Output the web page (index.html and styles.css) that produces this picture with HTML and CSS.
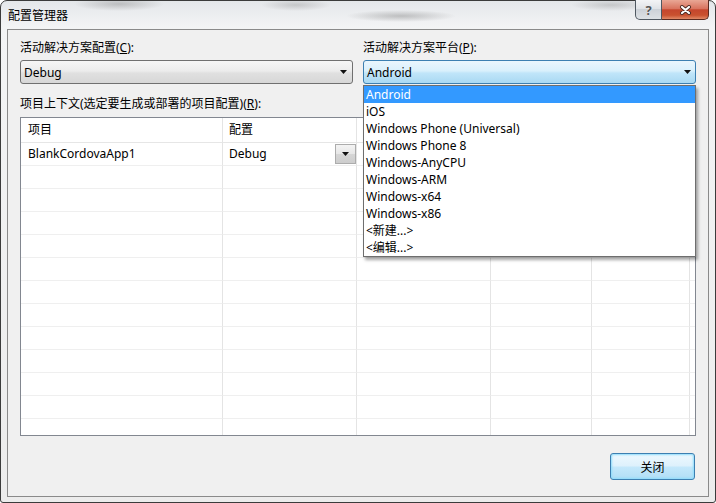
FILE: index.html
```html
<!DOCTYPE html>
<html lang="zh-CN">
<head>
  <meta charset="UTF-8">
  <title>配置管理器</title>
  <link rel="stylesheet" href="styles.css">
</head>
<body>
  <div class="window">
    <div class="titlebar">
      <span class="title">配置管理器</span>
      <div class="caption-buttons">
        <span class="btn-help">?</span>
        <span class="btn-close">
          <svg width="13" height="10" viewBox="0 0 13 10">
            <path d="M3 2l7 6M10 2l-7 6" stroke="#4d2a22" stroke-width="4" stroke-linecap="round" fill="none"/>
            <path d="M3 2l7 6M10 2l-7 6" stroke="#fff" stroke-width="2.2" stroke-linecap="round" fill="none"/>
          </svg>
        </span>
      </div>
    </div>

    <div class="client">
      <div class="pickers">
        <div class="field">
          <label>活动解决方案配置(<u>C</u>):</label>
          <div class="combo">
            <span>Debug</span>
            <svg class="arrow" width="7" height="4" viewBox="0 0 7 4"><polygon points="0,0 7,0 3.5,4" fill="#111"/></svg>
          </div>
        </div>
        <div class="field">
          <label>活动解决方案平台(<u>P</u>):</label>
          <div class="combo combo-open">
            <span>Android</span>
            <svg class="arrow" width="7" height="4" viewBox="0 0 7 4"><polygon points="0,0 7,0 3.5,4" fill="#111"/></svg>
          </div>
          <ul class="droplist">
            <li class="sel">Android</li>
            <li>iOS</li>
            <li>Windows Phone (Universal)</li>
            <li>Windows Phone 8</li>
            <li>Windows-AnyCPU</li>
            <li>Windows-ARM</li>
            <li>Windows-x64</li>
            <li>Windows-x86</li>
            <li>&lt;新建...&gt;</li>
            <li>&lt;编辑...&gt;</li>
          </ul>
        </div>
      </div>

      <label class="ctx-label">项目上下文(选定要生成或部署的项目配置)(<u>R</u>):</label>

      <div class="listview">
        <div class="lv-row lv-head"><span>项目</span><span>配置</span><span></span><span></span><span></span><span></span></div>
        <div class="lv-row">
          <span>BlankCordovaApp1</span>
          <span class="cell-combo">Debug
            <i class="mini-drop"><svg width="7" height="4" viewBox="0 0 7 4"><polygon points="0,0 7,0 3.5,4" fill="#111"/></svg></i>
          </span>
          <span></span><span></span><span></span><span></span>
        </div>
        <div class="lv-row"><span></span><span></span><span></span><span></span><span></span><span></span></div>
        <div class="lv-row"><span></span><span></span><span></span><span></span><span></span><span></span></div>
        <div class="lv-row"><span></span><span></span><span></span><span></span><span></span><span></span></div>
        <div class="lv-row"><span></span><span></span><span></span><span></span><span></span><span></span></div>
        <div class="lv-row"><span></span><span></span><span></span><span></span><span></span><span></span></div>
        <div class="lv-row"><span></span><span></span><span></span><span></span><span></span><span></span></div>
        <div class="lv-row"><span></span><span></span><span></span><span></span><span></span><span></span></div>
        <div class="lv-row"><span></span><span></span><span></span><span></span><span></span><span></span></div>
        <div class="lv-row"><span></span><span></span><span></span><span></span><span></span><span></span></div>
        <div class="lv-row"><span></span><span></span><span></span><span></span><span></span><span></span></div>
        <div class="lv-row"><span></span><span></span><span></span><span></span><span></span><span></span></div>
        <div class="lv-row"><span></span><span></span><span></span><span></span><span></span><span></span></div>
      </div>

      <div class="actions">
        <button class="btn-default">关闭</button>
      </div>
    </div>
  </div>
</body>
</html>
```

FILE: styles.css
```css
* {
  margin: 0;
  padding: 0;
  box-sizing: border-box;
}

body {
  width: 716px;
  height: 503px;
  overflow: hidden;
  background: #fff;
  font-family: "Noto Sans", "Noto Sans CJK SC", sans-serif;
  font-size: 12px;
  color: #000;
}

.window {
  width: 716px;
  height: 503px;
  display: flex;
  flex-direction: column;
  padding: 0 6px 5px;
  border: 1px solid #3b3b3b;
  border-radius: 7px 7px 3px 3px;
  background:
    radial-gradient(ellipse 45px 7px at 118px 3px, rgba(110, 110, 110, 0.35), transparent),
    radial-gradient(ellipse 35px 6px at 295px 4px, rgba(120, 120, 120, 0.3), transparent),
    radial-gradient(ellipse 55px 6px at 400px 15px, rgba(100, 100, 100, 0.35), transparent),
    radial-gradient(ellipse 40px 6px at 610px 4px, rgba(120, 120, 120, 0.3), transparent),
    linear-gradient(#e4e7ea, #f3f4f5 26px, #ececec);
}

/* title bar */
.titlebar {
  height: 28px;
  display: flex;
  justify-content: space-between;
  align-items: flex-start;
}

.title {
  padding: 6px 0 0 1px;
  line-height: 16px;
  font-family: "Noto Sans CJK SC", sans-serif;
}

.caption-buttons {
  display: flex;
  margin-top: -1px;
}

.btn-help, .btn-close {
  height: 20px;
  display: flex;
  align-items: center;
  justify-content: center;
  border: 1px solid #4f5861;
  border-top: none;
}

.btn-help {
  width: 27px;
  border-radius: 0 0 0 5px;
  background: linear-gradient(#f3f4f6, #e0e3e7 45%, #cdd2d8 50%, #dde1e5);
  color: #555;
  font-weight: bold;
  font-size: 13px;
  text-shadow: 0 0 1px #fff;
}

.btn-close {
  width: 47px;
  border-left: none;
  border-color: #5a2a20;
  border-radius: 0 0 5px 0;
  background: linear-gradient(#e9a795, #d9745f 45%, #c5462d 52%, #c9512f 80%, #e28a67);
}

/* client area */
.client {
  flex: 1;
  display: flex;
  flex-direction: column;
  padding: 10px 12px 0;
  border: 1px solid #8a8a8a;
  background: #f0f0f0;
}

label {
  display: block;
  line-height: 16px;
}

.pickers {
  display: grid;
  grid-template-columns: 1fr 1fr;
  gap: 10px;
}

.field {
  position: relative;
}

.field label {
  margin-bottom: 4px;
}

.combo {
  height: 24px;
  display: flex;
  align-items: center;
  justify-content: space-between;
  padding: 0 5px 0 3px;
  border: 1px solid #707070;
  border-radius: 3px;
  background: linear-gradient(#f6f6f6, #ececec 45%, #e0e0e0 55%, #d7d7d7);
}

.combo-open {
  padding-right: 4px;
  border-color: #3c7fb1;
  background: linear-gradient(#eaf6fd, #d9f0fc 45%, #c0e5f9 55%, #a9d9f3);
}

.droplist {
  position: absolute;
  top: 100%;
  left: 0;
  width: 100%;
  margin-top: 1px;
  z-index: 2;
  list-style: none;
  background: #fff;
  border: 1px solid #6e6e6e;
  box-shadow: 2px 3px 3px rgba(0, 0, 0, 0.35);
}

.droplist li {
  height: 17px;
  line-height: 17px;
  padding-left: 2px;
}

.droplist li.sel {
  background: #3399ff;
  color: #fff;
}

.ctx-label {
  margin: 12px 0 5px;
}

/* project list */
.listview {
  height: 319px;
  overflow: hidden;
  border: 1px solid #828790;
  background: #fff;
}

.lv-row {
  display: grid;
  grid-template-columns: 202px 134px 134px 101px 98px 5px;
  height: 23px;
}

.lv-row > span {
  line-height: 22px;
  padding-left: 7px;
  border-right: 1px solid #e4e4e4;
  border-bottom: 1px solid #efefef;
  white-space: nowrap;
  overflow: hidden;
}

.lv-row > span + span {
  padding-left: 6px;
}

.lv-row > span:last-child {
  border-right: none;
}

.lv-head {
  height: 25px;
}

.lv-head > span {
  line-height: 24px;
  border-bottom-color: #e6e6e6;
}

.lv-row > span.cell-combo {
  display: flex;
  align-items: center;
  justify-content: space-between;
}

.mini-drop {
  width: 21px;
  height: 20px;
  display: flex;
  align-items: center;
  justify-content: center;
  border: 1px solid #acacac;
  background: linear-gradient(#f4f4f4, #e6e6e6 50%, #d6d6d6 50%, #cdcdcd);
}

/* bottom buttons */
.actions {
  display: flex;
  justify-content: flex-end;
  margin-top: 17px;
  padding-right: 1px;
}

.btn-default {
  width: 85px;
  height: 27px;
  font-family: "Noto Sans CJK SC", sans-serif;
  font-size: 12px;
  color: #000;
  border: 1px solid #3c7fb1;
  border-radius: 3px;
  background: linear-gradient(#eef8fe, #ddf1fc 48%, #c4e8fb 52%, #b2def6);
  box-shadow: inset 0 0 2px 1px #8fdcfb;
}
```
